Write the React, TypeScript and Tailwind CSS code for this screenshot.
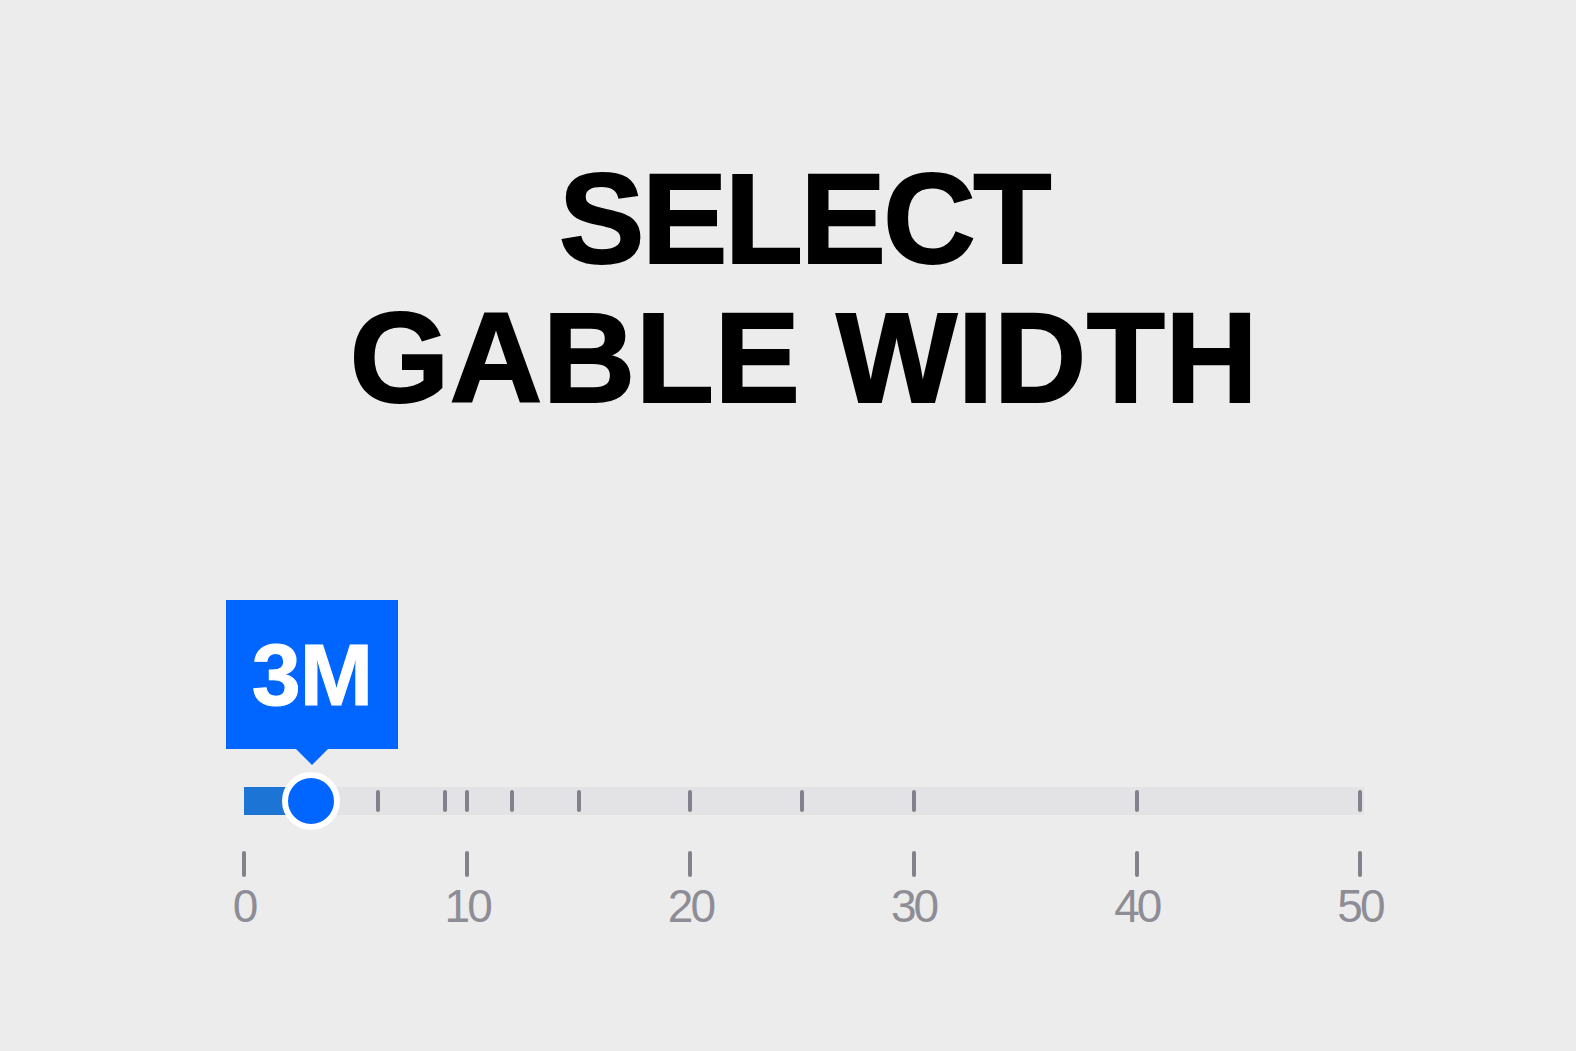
import React from 'react';

const UNIT = 22.32;
const trackTicks = [6, 9, 10, 12, 15, 20, 25, 30, 40, 50];
const labels = [0, 10, 20, 30, 40, 50];

function GableSlider({ value }: { value: number }) {
  const pos = value * UNIT;

  return (
    <div className="mx-auto w-[1120px]">
      {/* value bubble sits above the thumb */}
      <div className="relative h-[187px]">
        <div
          className="absolute top-0 flex h-[149px] w-[172px] -translate-x-1/2 items-center justify-center bg-[#0066ff]"
          style={{ left: pos + 1 }}
        >
          <span className="text-[88px] font-bold leading-none tracking-[-1px] text-white [-webkit-text-stroke:1px_#fff]">
            {value}M
          </span>
          <div className="absolute -bottom-[16px] left-1/2 h-0 w-0 -translate-x-1/2 border-x-[16px] border-t-[16px] border-x-transparent border-t-[#0066ff]" />
        </div>
      </div>

      {/* track */}
      <div className="relative h-[28px] bg-[#e3e3e6]">
        <div className="absolute left-0 top-0 h-full bg-[#1c74d4]" style={{ width: pos }} />
        {trackTicks.map((t) => (
          <div
            key={t}
            className="absolute top-[3px] h-[22px] w-[4px] -translate-x-1/2 rounded-full bg-[#83828c]"
            style={{ left: t * UNIT }}
          />
        ))}
        <div
          className="absolute top-1/2 h-[58px] w-[58px] -translate-x-1/2 -translate-y-1/2 rounded-full border-[6px] border-white bg-[#0066ff]"
          style={{ left: pos }}
        />
      </div>

      {/* scale */}
      <div className="mt-[36px] flex w-[1116px] justify-between">
        {labels.map((l) => (
          <div key={l} className="flex w-0 flex-col items-center">
            <div className="h-[26px] w-[4px] rounded-full bg-[#83828c]" />
            <span className="mt-[6px] text-[46px] leading-[46px] tracking-[-3px] text-[#8e8d96]">{l}</span>
          </div>
        ))}
      </div>
    </div>
  );
}

export default function App() {
  return (
    <div
      className="min-h-screen bg-[#ececec] pl-[32px] pt-[149px]"
      style={{ fontFamily: '"Liberation Sans", Arial, sans-serif' }}
    >
      <h1 className="flex flex-col items-center text-[128px] font-bold uppercase leading-[139px] text-black [-webkit-text-stroke:2px_#000]">
        <span className="tracking-[-2.5px]">Select</span>
        <span className="tracking-[0.5px]">Gable Width</span>
      </h1>
      <div className="mt-[173px]">
        <GableSlider value={3} />
      </div>
    </div>
  );
}
